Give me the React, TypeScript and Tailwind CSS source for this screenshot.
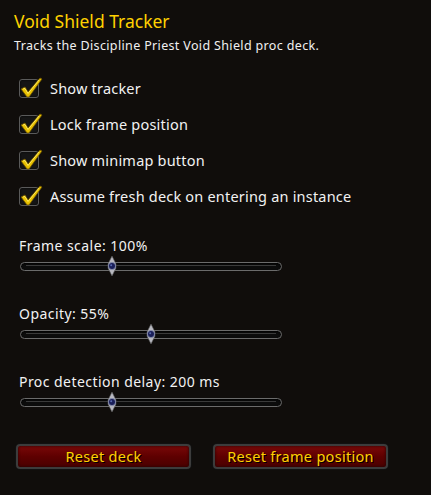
const CHECKS = [
  'Show tracker',
  'Lock frame position',
  'Show minimap button',
  'Assume fresh deck on entering an instance',
]

const SLIDERS = [
  { label: 'Frame scale: 100%', pos: 0.35 },
  { label: 'Opacity: 55%', pos: 0.5 },
  { label: 'Proc detection delay: 200 ms', pos: 0.35 },
]

function CheckBox() {
  return (
    <div className="relative w-[20px] h-[19px] shrink-0">
      <div className="absolute inset-0 rounded-[3px] border border-[#5a5a5a] bg-[#151515] shadow-[inset_0_0_2px_#000]" />
      <svg className="absolute -left-[1px] -top-[5px]" width="26" height="26" viewBox="0 0 26 26">
        <path d="M3 15 L7 13 L10 18 L22 4 L24 5 L11 23 L9 23 Z" fill="#e8c000" stroke="#6b5200" strokeWidth="0.8" strokeLinejoin="round" />
        <path d="M5 15 L7 14.5 L10 19.5 L21 6" fill="none" stroke="#fff27a" strokeWidth="0.8" />
      </svg>
    </div>
  )
}

function Slider({ pos }: { pos: number }) {
  return (
    <div className="relative w-[262px] h-[20px] flex items-center">
      <div className="w-full h-[9px] rounded-full border border-[#6b6b6b] bg-[#0c0c0c] shadow-[inset_0_1px_2px_#000]">
        <div className="mx-[5px] mt-[2px] h-[1px] bg-[#3a3a3a]" />
      </div>
      <svg
        className="absolute top-0"
        style={{ left: `${pos * 262 - 6}px` }}
        width="12"
        height="20"
        viewBox="0 0 12 20"
      >
        <path d="M6 0 L8 4 L10 8 L10 12 L8 16 L6 20 L4 16 L2 12 L2 8 L4 4 Z" fill="#b8b8c0" stroke="#555" strokeWidth="0.6" />
        <circle cx="6" cy="10" r="3.6" fill="#1a1f5a" stroke="#8890b0" strokeWidth="0.8" />
        <circle cx="5.2" cy="9.2" r="1" fill="#5a6ab0" />
      </svg>
    </div>
  )
}

function RedButton({ label }: { label: string }) {
  return (
    <button className="w-[175px] h-[25px] rounded-[4px] border-2 border-[#3c3c3c] bg-gradient-to-b from-[#7a0a0a] via-[#5e0000] to-[#4a0000] shadow-[0_0_0_1px_#111,inset_0_0_3px_#200] text-[14.5px] tracking-[0.3px] text-[#ffd100] [text-shadow:1px_1px_0_#000] leading-none">
      {label}
    </button>
  )
}

export default function App() {
  return (
    <div className="w-[431px] h-[495px] bg-[#100d0b] font-['Noto_Sans',sans-serif] text-white overflow-hidden">
      <div className="pl-[14px] pt-[9px]">
        <h1 className="text-[17.5px] leading-[25px] text-[#ffd100]">Void Shield Tracker</h1>
        <p className="text-[12.5px] leading-[16px] mt-[4px] tracking-[0.35px] text-[#f0f0f0]">
          Tracks the Discipline Priest Void Shield proc deck.
        </p>
      </div>

      <div className="pl-[19px] mt-[25px] flex flex-col gap-[17px]">
        {CHECKS.map(c => (
          <div key={c} className="flex items-center gap-[11px] h-[19px]">
            <CheckBox />
            <span className="text-[14.5px] tracking-[0.2px] text-[#f2f2f2]">{c}</span>
          </div>
        ))}
      </div>

      <div className="pl-[19px] mt-[31px] flex flex-col gap-[29px]">
        {SLIDERS.map(s => (
          <div key={s.label} className="flex flex-col gap-[1px]">
            <span className="text-[14px] leading-[18px] tracking-[0.45px] text-[#f2f2f2]">{s.label}</span>
            <div className="pl-[1px]">
              <Slider pos={s.pos} />
            </div>
          </div>
        ))}
      </div>

      <div className="pl-[16px] mt-[32px] flex gap-[22px]">
        <RedButton label="Reset deck" />
        <RedButton label="Reset frame position" />
      </div>
    </div>
  )
}
